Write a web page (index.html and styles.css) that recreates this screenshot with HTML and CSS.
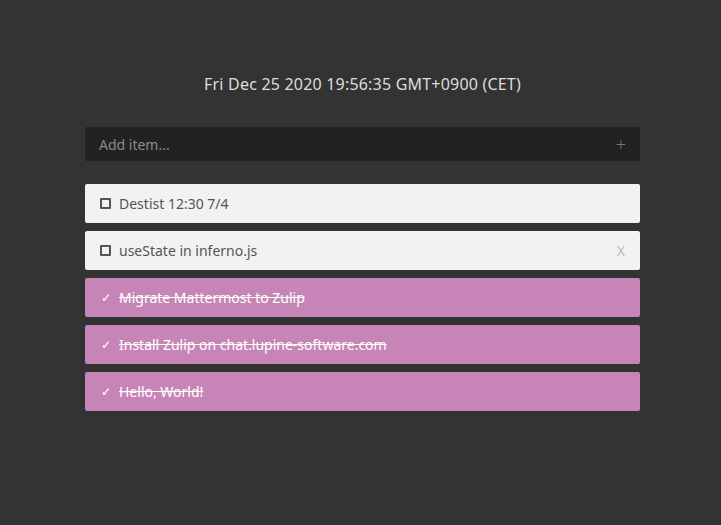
FILE: index.html
```html
<!DOCTYPE html>
<html>
<head>
<meta charset="utf-8">
<link rel="stylesheet" href="styles.css">
</head>
<body>
<main class="app">
  <h1 class="clock">Fri Dec 25 2020 19:56:35 GMT+0900 (CET)</h1>
  <form class="add">
    <span class="add-placeholder">Add item...</span>
    <span class="add-plus">+</span>
  </form>
  <ul class="list">
    <li class="item"><span class="box"></span><span class="label">Destist 12:30 7/4</span></li>
    <li class="item"><span class="box"></span><span class="label">useState in inferno.js</span><span class="remove">X</span></li>
    <li class="item done"><span class="tick">✓</span><span class="label">Migrate Mattermost to Zulip</span></li>
    <li class="item done"><span class="tick">✓</span><span class="label">Install Zulip on chat.lupine-software.com</span></li>
    <li class="item done"><span class="tick">✓</span><span class="label">Hello, World!</span></li>
  </ul>
</main>
</body>
</html>
```
FILE: styles.css
```css
html, body {
  margin: 0;
  padding: 0;
  background: #333333;
  font-family: "Noto Sans", "Open Sans", sans-serif;
}
body {
  padding-left: 4px;
}
.app {
  width: 555px;
  margin: 0 auto;
  padding-top: 71px;
  display: flex;
  flex-direction: column;
}
.clock {
  margin: 0;
  font-size: 16px;
  font-weight: 400;
  letter-spacing: 0.2px;
  color: #dddddd;
  text-align: center;
  line-height: 26px;
}
.add {
  margin: 30px 0 0 0;
  height: 34px;
  background: #222222;
  border-radius: 2px;
  display: flex;
  align-items: center;
  justify-content: space-between;
  padding: 0 14px;
  box-sizing: border-box;
}
.add-placeholder {
  color: #8a8a8a;
  font-size: 14px;
}
.add-plus {
  color: #777777;
  font-size: 18px;
  font-weight: 300;
  margin-right: 0;
}
.list {
  list-style: none;
  margin: 23px 0 0 0;
  padding: 0;
  display: flex;
  flex-direction: column;
  gap: 8px;
}
.item {
  height: 39px;
  background: #f2f2f2;
  border-radius: 2px;
  display: flex;
  align-items: center;
  padding: 0 15px;
  box-sizing: border-box;
  font-size: 14px;
  color: #555555;
}
.box {
  width: 7px;
  height: 7px;
  border: 2px solid #555555;
  border-radius: 1px;
  margin-right: 8px;
  flex: none;
}
.label {
  flex: 1;
}
.remove {
  color: #bbbbbb;
  font-size: 14px;
  margin-right: 0;
}
.item.done {
  background: #c785b7;
  color: #ffffff;
}
.tick {
  width: 11px;
  margin-right: 8px;
  font-size: 12px;
  flex: none;
  text-align: center;
}
.item.done .label {
  text-decoration: line-through;
}
```
